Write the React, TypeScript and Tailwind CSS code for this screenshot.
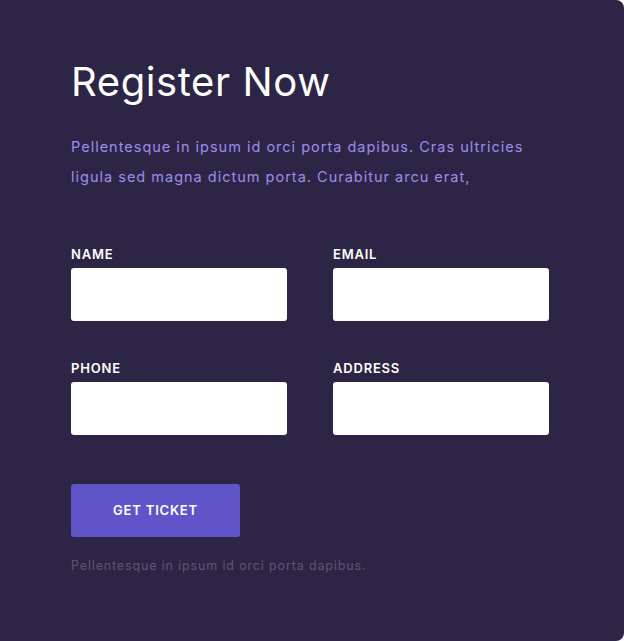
const fields = [
  { label: "NAME", type: "text" },
  { label: "EMAIL", type: "email" },
  { label: "PHONE", type: "tel" },
  { label: "ADDRESS", type: "text" },
];

export default function App() {
  return (
    <div className="w-[624px] h-[641px] bg-white">
      <div
        className="h-full rounded-r-[8px] bg-[#2d2545] pl-[71px] pt-[58px]"
        style={{ fontFamily: "Inter, 'Open Sans', sans-serif" }}
      >
        <h1 className="text-[40px] leading-[48px] font-normal text-white tracking-[0.6px]">
          Register Now
        </h1>
        <p className="mt-[26px] w-[462px] text-[14.5px] leading-[30px] text-[#9d8ded] tracking-[1px]">
          Pellentesque in ipsum id orci porta dapibus. Cras ultricies ligula
          sed magna dictum porta. Curabitur arcu erat,
        </p>

        <form className="mt-[53px] grid w-[478px] grid-cols-2 gap-x-[46px] gap-y-[38px]">
          {fields.map((f) => (
            <label key={f.label} className="flex flex-col">
              <span className="text-[13px] leading-[18px] font-semibold text-white tracking-[0.8px]">
                {f.label}
              </span>
              <input
                type={f.type}
                className="mt-[5px] h-[53px] w-[216px] rounded-[3px] bg-white outline-none"
              />
            </label>
          ))}
        </form>

        <button className="mt-[49px] h-[53px] w-[169px] rounded-[3px] bg-[#5f55c9] text-[13px] font-semibold text-white tracking-[0.8px]">
          GET TICKET
        </button>
        <p className="mt-[20px] text-[12.5px] text-[#5d5673] tracking-[0.85px]">
          Pellentesque in ipsum id orci porta dapibus.
        </p>
      </div>
    </div>
  );
}
